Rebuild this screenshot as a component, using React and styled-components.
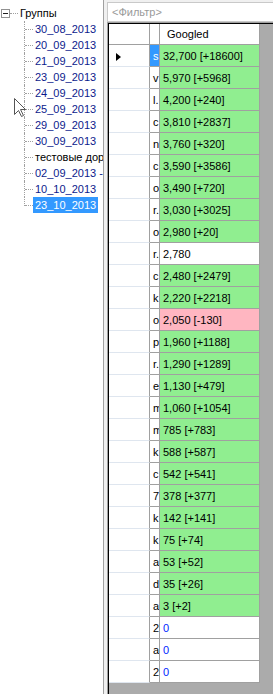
import React from 'react'
import styled, { createGlobalStyle } from 'styled-components'

const GlobalStyle = createGlobalStyle`
  html, body {
    margin: 0;
    padding: 0;
  }
  body {
    font-family: "Liberation Sans", Arial, sans-serif;
    font-size: 11px;
    background: #f0f0f0;
  }
`

// Whole window: tree on the left, filter + grid on the right
const Window = styled.div`
  position: relative;
  display: flex;
  width: 273px;
  height: 694px;
  overflow: hidden;
  background: #f0f0f0;
`

// Left tree view
const TreePanel = styled.div`
  flex: none;
  width: 104px;
  box-sizing: border-box;
  padding-top: 5px;
  background: #fff;
  border-right: 1px solid #a0a0a0;
  overflow: hidden;
`

const RootRow = styled.div`
  display: flex;
  align-items: center;
  height: 16px;
  padding-left: 1px;
`

const Expander = styled.span`
  flex: none;
  display: flex;
  align-items: center;
  justify-content: center;
  width: 9px;
  height: 9px;
  box-sizing: border-box;
  border: 1px solid #919191;
  background: #fff;
`

const Minus = styled.span`
  width: 5px;
  height: 1px;
  background: #1e1e1e;
`

const RootLine = styled.span`
  flex: none;
  width: 8px;
  border-top: 1px dotted #a0a0a0;
`

const Label = styled.span`
  flex: none;
  padding: 0 2px;
  line-height: 16px;
  height: 16px;
  white-space: nowrap;
  color: ${p => (p.$selected ? '#fff' : p.$color || '#000')};
  background: ${p => (p.$selected ? '#3399ff' : 'transparent')};
`

const ChildRow = styled.div`
  display: flex;
  align-items: center;
  height: 16px;
`

// tree connector: vertical dotted line + horizontal dotted stub
const Branch = styled.span`
  position: relative;
  flex: none;
  align-self: stretch;
  width: 9px;
  margin-left: 24px;

  &::before {
    content: '';
    position: absolute;
    left: 0;
    top: 0;
    height: ${p => (p.$last ? '9px' : '100%')};
    border-left: 1px dotted #a0a0a0;
  }
  &::after {
    content: '';
    position: absolute;
    left: 1px;
    top: 8px;
    width: 8px;
    border-top: 1px dotted #a0a0a0;
  }
`

// Right side
const RightPanel = styled.div`
  flex: 1;
  min-width: 0;
  display: flex;
  flex-direction: column;
  margin-left: 3px;
`

const FilterBox = styled.div`
  flex: none;
  display: flex;
  align-items: center;
  height: 20px;
  margin-top: 2px;
  box-sizing: border-box;
  padding-left: 4px;
  border: 1px solid #c9c9c9;
  border-right: none;
  background: #fff;
  color: #9a9a9a;
`

const GridFrame = styled.div`
  flex: 1;
  display: flex;
  border-top: 1px solid #a0a0a0;
  border-left: 1px solid #a0a0a0;
`

const GridInner = styled.div`
  flex: 1;
  border-top: 1px solid #000;
  border-left: 1px solid #000;
  background: #ababab;
`

const Table = styled.div`
  display: grid;
  grid-template-columns: 41px 10px 100px;
  grid-template-rows: 21px;
  grid-auto-rows: 22px;
  width: max-content;
`

const Cell = styled.div`
  display: flex;
  align-items: center;
  box-sizing: border-box;
  overflow: hidden;
  white-space: nowrap;
`

const HeaderCell = styled(Cell)`
  background: #fff;
  padding-left: ${p => p.$pad || 0}px;
  border-right: 1px solid #a0a0a0;
  border-bottom: 1px solid #a0a0a0;
  color: #000;
`

const RowHeader = styled(Cell)`
  padding-left: 7px;
  background: #fff;
  border-right: 1px solid #a0a0a0;
  border-bottom: 1px solid #dfe6ef;
`

const Pointer = styled.span`
  width: 0;
  height: 0;
  margin-top: 3px;
  border-left: 5px solid #000;
  border-top: 4px solid transparent;
  border-bottom: 4px solid transparent;
`

const KeyCell = styled(Cell)`
  padding-left: 3px;
  border-right: 1px solid #a0a0a0;
  border-bottom: 1px solid #a0a0a0;
  background: ${p => (p.$selected ? '#3399ff' : '#fff')};
  color: ${p => (p.$selected ? '#fff' : '#000')};
`

const tones = {
  up: '#90ee90',
  down: '#ffb6c1',
  none: '#fff',
}

const ValueCell = styled(Cell)`
  padding-left: 3px;
  border-right: 1px solid #a0a0a0;
  border-bottom: 1px solid #a0a0a0;
  background: ${p => tones[p.$tone]};
  color: ${p => (p.$zero ? '#0026ff' : '#000')};
`

const Cursor = styled.svg`
  position: absolute;
  left: 14px;
  top: 98px;
  pointer-events: none;
`

const groups = [
  '30_08_2013',
  '20_09_2013',
  '21_09_2013',
  '23_09_2013',
  '24_09_2013',
  '25_09_2013',
  '29_09_2013',
  '30_09_2013',
  'тестовые дорвеи',
  '02_09_2013 - 2',
  '10_10_2013',
  '23_10_2013',
]

const rows = [
  ['s', '32,700 [+18600]', 'up'],
  ['v', '5,970 [+5968]', 'up'],
  ['l.', '4,200 [+240]', 'up'],
  ['c', '3,810 [+2837]', 'up'],
  ['n', '3,760 [+320]', 'up'],
  ['c', '3,590 [+3586]', 'up'],
  ['o', '3,490 [+720]', 'up'],
  ['r.', '3,030 [+3025]', 'up'],
  ['o', '2,980 [+20]', 'up'],
  ['r.', '2,780', 'none'],
  ['c', '2,480 [+2479]', 'up'],
  ['k', '2,220 [+2218]', 'up'],
  ['o', '2,050 [-130]', 'down'],
  ['p', '1,960 [+1188]', 'up'],
  ['r.', '1,290 [+1289]', 'up'],
  ['e', '1,130 [+479]', 'up'],
  ['m', '1,060 [+1054]', 'up'],
  ['m', '785 [+783]', 'up'],
  ['k', '588 [+587]', 'up'],
  ['c', '542 [+541]', 'up'],
  ['7', '378 [+377]', 'up'],
  ['k', '142 [+141]', 'up'],
  ['k', '75 [+74]', 'up'],
  ['a', '53 [+52]', 'up'],
  ['d', '35 [+26]', 'up'],
  ['a', '3 [+2]', 'up'],
  ['2', '0', 'none'],
  ['a', '0', 'none'],
  ['2', '0', 'none'],
]

function App() {
  return (
    <Window>
      <GlobalStyle />
      <TreePanel>
        <RootRow>
          <Expander>
            <Minus />
          </Expander>
          <RootLine />
          <Label>Группы</Label>
        </RootRow>
        {groups.map((g, i) => (
          <ChildRow key={g}>
            <Branch $last={i === groups.length - 1} />
            <Label
              $selected={i === groups.length - 1}
              $color={g.startsWith('тест') ? '#000' : '#0c1a8c'}
            >
              {g}
            </Label>
          </ChildRow>
        ))}
      </TreePanel>

      <RightPanel>
        <FilterBox>&lt;Фильтр&gt;</FilterBox>
        <GridFrame>
          <GridInner>
            <Table>
              <HeaderCell />
              <HeaderCell />
              <HeaderCell $pad={7}>Googled</HeaderCell>
              {rows.map(([key, value, tone], i) => (
                <React.Fragment key={i}>
                  <RowHeader>{i === 0 && <Pointer />}</RowHeader>
                  <KeyCell $selected={i === 0}>{key}</KeyCell>
                  <ValueCell $tone={tone} $zero={value === '0'}>
                    {value}
                  </ValueCell>
                </React.Fragment>
              ))}
            </Table>
          </GridInner>
        </GridFrame>
      </RightPanel>

      <Cursor width="13" height="20" viewBox="0 0 13 20">
        <path
          d="M0.5 0.5 L0.5 16.5 L4.5 12.5 L7.5 18.5 L9.5 17.5 L6.5 11.5 L11.5 11.5 Z"
          fill="#fff"
          stroke="#555"
          strokeWidth="1"
        />
      </Cursor>
    </Window>
  )
}

export default App
